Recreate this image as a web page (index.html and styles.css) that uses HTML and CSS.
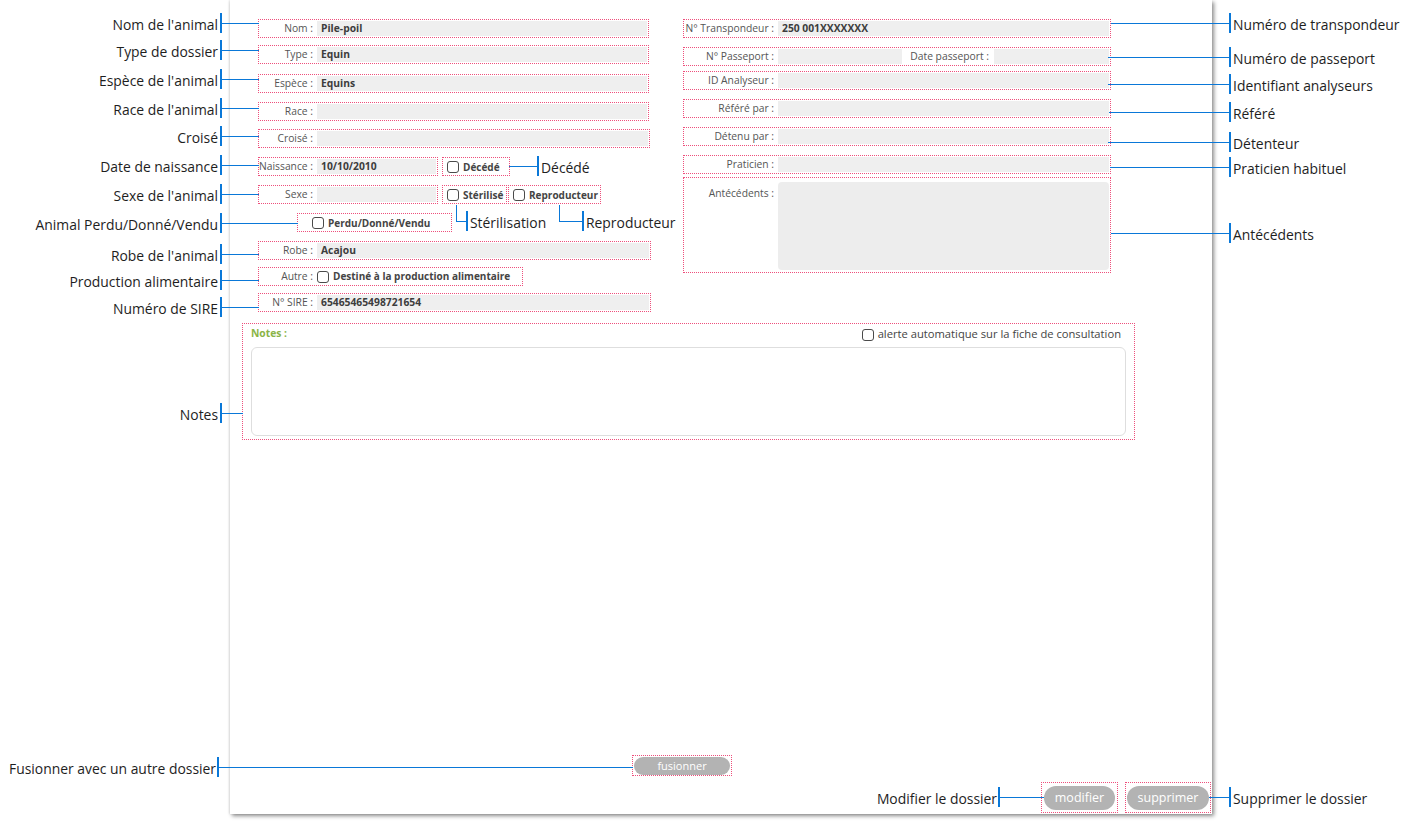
FILE: index.html
```html
<!DOCTYPE html>
<html lang="fr">
<head>
<meta charset="utf-8">
<title>Dossier animal</title>
<link rel="stylesheet" href="styles.css">
</head>
<body>
<div class="stage">
  <div class="panel">
    <div class="top">
      <div class="col-left">
        <div class="field w391"><span class="lbl">Nom :</span><span class="val">Pile-poil</span></div>
        <div class="field w391 mt7"><span class="lbl">Type :</span><span class="val">Equin</span></div>
        <div class="field w391 mt10"><span class="lbl">Espèce :</span><span class="val">Equins</span></div>
        <div class="field w391 mt9"><span class="lbl">Race :</span><span class="val"></span></div>
        <div class="field w392 mt8"><span class="lbl">Croisé :</span><span class="val"></span></div>
        <div class="line mt9">
          <div class="field w180"><span class="lbl">Naissance :</span><span class="val">10/10/2010</span></div>
          <div class="opt w68 ml4"><span class="cb"></span><span>Décédé</span></div>
        </div>
        <div class="line mt9">
          <div class="field w180"><span class="lbl">Sexe :</span><span class="val"></span></div>
          <div class="opt w65 ml4"><span class="cb"></span><span>Stérilisé</span></div>
          <div class="opt w93 ml1"><span class="cb"></span><span>Reproducteur</span></div>
        </div>
        <div class="line mt9">
          <div class="opt lost"><span class="cb"></span><span>Perdu/Donné/Vendu</span></div>
        </div>
        <div class="field w393 mt9"><span class="lbl">Robe :</span><span class="val">Acajou</span></div>
        <div class="field w265 mt7"><span class="lbl">Autre :</span><span class="cb"></span><span class="opt-text">Destiné à la production alimentaire</span></div>
        <div class="field w393 mt7"><span class="lbl">N° SIRE :</span><span class="val">65465465498721654</span></div>
      </div>
      <div class="col-right">
        <div class="field rf"><span class="lbl wide">N° Transpondeur :</span><span class="val">250 001XXXXXXX</span></div>
        <div class="field rf mt9"><span class="lbl wide">N° Passeport :</span><span class="val short"></span><span class="lbl mid">Date passeport :</span><span class="val"></span></div>
        <div class="field rf mt5"><span class="lbl wide">ID Analyseur :</span><span class="val"></span></div>
        <div class="field rf mt9"><span class="lbl wide">Référé par :</span><span class="val"></span></div>
        <div class="field rf mt9"><span class="lbl wide">Détenu par :</span><span class="val"></span></div>
        <div class="field rf mt9"><span class="lbl wide">Praticien :</span><span class="val"></span></div>
        <div class="field rf tall mt3"><span class="lbl wide">Antécédents :</span><span class="area"></span></div>
      </div>
    </div>

    <div class="notes">
      <div class="notes-head">
        <span class="notes-title">Notes :</span>
        <span class="alert"><span class="cb"></span><span>alerte automatique sur la fiche de consultation</span></span>
      </div>
      <div class="note-area"></div>
    </div>

    <div class="merge-row">
      <div class="btn-box merge"><span class="pill small">fusionner</span></div>
    </div>

    <div class="actions">
      <div class="btn-box edit"><span class="pill p-edit">modifier</span></div>
      <div class="btn-box del"><span class="pill p-del">supprimer</span></div>
    </div>
  </div>

  <svg class="callouts" width="1413" height="824" viewBox="0 0 1413 824">
    <g class="blue">
      <!-- left side -->
      <rect x="220" y="13" width="2" height="20"/><rect x="222" y="23" width="37" height="1"/>
      <rect x="220" y="40" width="2" height="20"/><rect x="222" y="50" width="37" height="1"/>
      <rect x="220" y="69" width="2" height="20"/><rect x="222" y="79" width="37" height="1"/>
      <rect x="220" y="98" width="2" height="20"/><rect x="222" y="108" width="37" height="1"/>
      <rect x="220" y="126" width="2" height="20"/><rect x="222" y="136" width="37" height="1"/>
      <rect x="220" y="155" width="2" height="20"/><rect x="222" y="165" width="37" height="1"/>
      <rect x="220" y="184" width="2" height="20"/><rect x="222" y="194" width="37" height="1"/>
      <rect x="220" y="213" width="2" height="20"/><rect x="222" y="223" width="76" height="1"/>
      <rect x="220" y="244" width="2" height="20"/><rect x="222" y="254" width="37" height="1"/>
      <rect x="220" y="270" width="2" height="20"/><rect x="222" y="280" width="37" height="1"/>
      <rect x="220" y="297" width="2" height="20"/><rect x="222" y="307" width="37" height="1"/>
      <rect x="220" y="403" width="2" height="20"/><rect x="222" y="413" width="21" height="1"/>
      <rect x="217" y="757" width="2" height="20"/><rect x="219" y="767" width="414" height="1"/>
      <!-- middle -->
      <rect x="509" y="166" width="28" height="1"/><rect x="537" y="156" width="2" height="20"/>
      <rect x="456" y="205" width="1" height="16"/><rect x="456" y="221" width="10" height="1"/><rect x="466" y="211" width="2" height="20"/>
      <rect x="559" y="205" width="1" height="16"/><rect x="559" y="221" width="23" height="1"/><rect x="582" y="211" width="2" height="20"/>
      <!-- right side -->
      <rect x="1111" y="23" width="118" height="1"/><rect x="1229" y="13" width="2" height="20"/>
      <rect x="1108" y="57" width="121" height="1"/><rect x="1229" y="47" width="2" height="20"/>
      <rect x="1108" y="84" width="121" height="1"/><rect x="1229" y="74" width="2" height="20"/>
      <rect x="1109" y="112" width="120" height="1"/><rect x="1229" y="102" width="2" height="20"/>
      <rect x="1108" y="142" width="121" height="1"/><rect x="1229" y="132" width="2" height="20"/>
      <rect x="1110" y="167" width="119" height="1"/><rect x="1229" y="157" width="2" height="20"/>
      <rect x="1111" y="233" width="118" height="1"/><rect x="1229" y="223" width="2" height="20"/>
      <rect x="1209" y="797" width="20" height="1"/><rect x="1229" y="787" width="2" height="20"/>
      <rect x="998" y="787" width="2" height="20"/><rect x="1000" y="797" width="44" height="1"/>
    </g>
    <g class="note-left">
      <text x="218" y="30">Nom de l'animal</text>
      <text x="218" y="57">Type de dossier</text>
      <text x="218" y="86">Espèce de l'animal</text>
      <text x="218" y="115">Race de l'animal</text>
      <text x="218" y="143">Croisé</text>
      <text x="218" y="172">Date de naissance</text>
      <text x="218" y="201">Sexe de l'animal</text>
      <text x="218" y="230">Animal Perdu/Donné/Vendu</text>
      <text x="218" y="261">Robe de l'animal</text>
      <text x="218" y="287">Production alimentaire</text>
      <text x="218" y="314">Numéro de SIRE</text>
      <text x="218" y="420">Notes</text>
      <text x="216" y="774">Fusionner avec un autre dossier</text>
      <text x="997" y="804">Modifier le dossier</text>
    </g>
    <g class="note-right">
      <text x="541" y="173">Décédé</text>
      <text x="470" y="228">Stérilisation</text>
      <text x="586" y="228">Reproducteur</text>
      <text x="1233" y="30">Numéro de transpondeur</text>
      <text x="1233" y="64">Numéro de passeport</text>
      <text x="1233" y="91">Identifiant analyseurs</text>
      <text x="1233" y="119">Référé</text>
      <text x="1233" y="149">Détenteur</text>
      <text x="1233" y="174">Praticien habituel</text>
      <text x="1233" y="240">Antécédents</text>
      <text x="1233" y="804">Supprimer le dossier</text>
    </g>
  </svg>
</div>
</body>
</html>
```

FILE: styles.css
```css
:root {
  --pink: #ee4f7c;
  --blue: #0a78d8;
}

body {
  margin: 0;
  background: #ffffff;
}

.stage {
  position: relative;
  width: 1413px;
  height: 824px;
  overflow: hidden;
  font-family: "Open Sans", "Noto Sans", sans-serif;
}

.panel {
  margin-left: 230px;
  width: 982px;
  height: 814px;
  background: #ffffff;
  box-shadow: -1px 0 2px rgba(0, 0, 0, 0.10), 2px 2px 4px rgba(0, 0, 0, 0.45);
  display: flex;
  flex-direction: column;
  font-size: 10.3px;
  color: #555555;
}

.top {
  display: flex;
  align-items: flex-start;
  padding-top: 19px;
}

.col-left {
  margin-left: 28px;
  width: 393px;
  display: flex;
  flex-direction: column;
}

.col-right {
  margin-left: 32px;
  width: 428px;
  display: flex;
  flex-direction: column;
}

.line {
  display: flex;
}

.field {
  display: flex;
  align-items: stretch;
  height: 19px;
  box-sizing: border-box;
  border: 1px dotted var(--pink);
}

.lbl {
  flex: none;
  width: 58px;
  box-sizing: border-box;
  padding-right: 4px;
  text-align: right;
  line-height: 17px;
  white-space: nowrap;
}

.lbl.wide {
  width: 94px;
}

.lbl.mid {
  width: 92px;
  padding-right: 5px;
}

.val {
  flex: 1;
  margin: 1px 1px 1px 0;
  padding-left: 4px;
  background: #efefef;
  line-height: 15px;
  font-weight: 700;
  color: #3d3d3d;
  white-space: nowrap;
  overflow: hidden;
}

.val.short {
  flex: none;
  width: 120px;
  margin-right: 0;
}

.w391 { width: 391px; }
.w392 { width: 392px; }
.w393 { width: 393px; }
.w180 { width: 180px; }
.w265 { width: 265px; }
.w68 { width: 68px; }
.w65 { width: 65px; }
.w93 { width: 93px; }
.rf { width: 428px; }

.mt3 { margin-top: 3px; }
.mt5 { margin-top: 5px; }
.mt7 { margin-top: 7px; }
.mt8 { margin-top: 8px; }
.mt9 { margin-top: 9px; }
.mt10 { margin-top: 10px; }
.ml1 { margin-left: 1px; }
.ml4 { margin-left: 4px; }

.opt {
  display: flex;
  align-items: center;
  gap: 4px;
  height: 19px;
  box-sizing: border-box;
  border: 1px dotted var(--pink);
  padding-left: 4px;
  font-size: 10px;
  font-weight: 700;
  color: #444444;
  white-space: nowrap;
}

.opt.lost {
  margin-left: 39px;
  width: 155px;
  padding-left: 14px;
}

.field .cb {
  align-self: center;
}

.opt-text {
  margin-left: 4px;
  line-height: 17px;
  font-size: 10px;
  font-weight: 700;
  color: #444444;
  white-space: nowrap;
}

.cb {
  flex: none;
  display: inline-block;
  width: 12px;
  height: 12px;
  box-sizing: border-box;
  border: 1px solid #4a4a4a;
  border-radius: 3px;
  background: #ffffff;
}

.tall {
  height: 96px;
}

.tall .lbl {
  padding-top: 7px;
}

.area {
  flex: 1;
  margin: 4px 1px 2px 0;
  background: #ededed;
  border-radius: 4px;
}

.notes {
  margin: 11px 0 0 12px;
  width: 893px;
  height: 117px;
  box-sizing: border-box;
  border: 1px dotted var(--pink);
  display: flex;
  flex-direction: column;
}

.notes-head {
  display: flex;
  justify-content: space-between;
  align-items: center;
  height: 17px;
  padding: 1px 13px 0 8px;
  line-height: 17px;
}

.notes-title {
  font-weight: 700;
  color: #8bb446;
}

.alert {
  display: flex;
  align-items: center;
  gap: 4px;
  font-size: 11.2px;
  color: #444444;
}

.alert .cb {
  margin-top: 2px;
}

.note-area {
  margin: 5px 8px 0 8px;
  height: 89px;
  box-sizing: border-box;
  border: 1px solid #dedede;
  border-radius: 6px;
}

.merge-row {
  margin: 315px 0 0 402px;
  display: flex;
}

.btn-box {
  display: flex;
  align-items: center;
  justify-content: center;
  box-sizing: border-box;
  border: 1px dotted var(--pink);
}

.merge {
  width: 100px;
  height: 21px;
}

.actions {
  display: flex;
  justify-content: flex-end;
  gap: 7px;
  margin-top: 6px;
  padding-right: 1px;
}

.edit {
  width: 77px;
  height: 31px;
}

.del {
  width: 86px;
  height: 31px;
}

.pill {
  display: flex;
  align-items: center;
  justify-content: center;
  background: #b3b3b3;
  color: #ffffff;
  border-radius: 12px;
  white-space: nowrap;
}

.pill.small {
  width: 96px;
  height: 18px;
  font-size: 11px;
  border-radius: 9px;
}

.p-edit {
  width: 71px;
  height: 24px;
  font-size: 12.5px;
}

.p-del {
  width: 82px;
  height: 24px;
  font-size: 12.5px;
}

.callouts {
  position: absolute;
  left: 0;
  top: 0;
  pointer-events: none;
}

.callouts .blue rect {
  fill: var(--blue);
}

.callouts text {
  font-family: "Open Sans", "Noto Sans", sans-serif;
  font-size: 13.9px;
  fill: #1e1e1e;
}

.note-left text {
  text-anchor: end;
}
```
